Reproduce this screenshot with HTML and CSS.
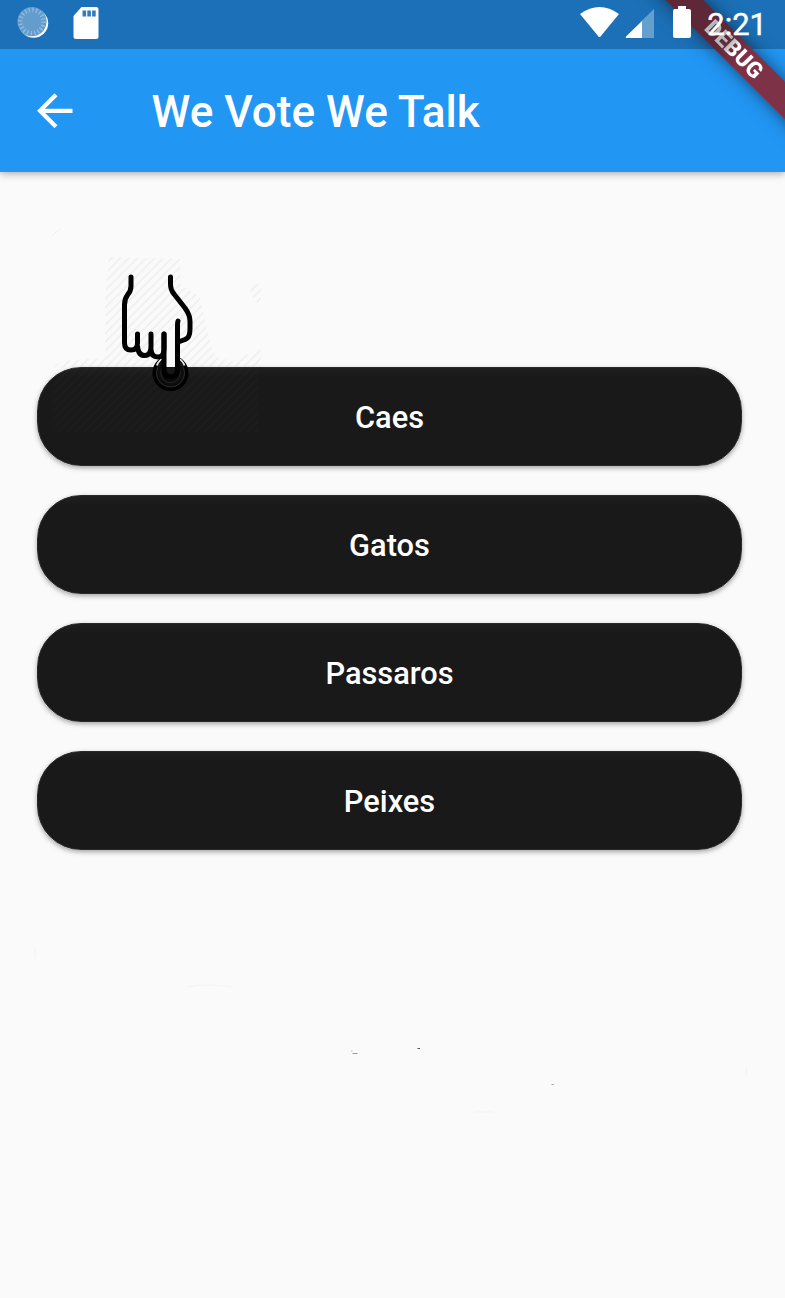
FILE: index.html
```html
<!DOCTYPE html>
<html lang="pt">
<head>
<meta charset="utf-8">
<title>We Vote We Talk</title>
<link rel="stylesheet" href="styles.css">
</head>
<body>
<div class="screen">
  <header class="top">
    <div class="statusbar">
      <svg class="spinner" width="32" height="32" viewBox="0 0 32 32">
        <circle cx="16.6" cy="16.2" r="14.600" fill="#fff"/>
        <circle cx="15" cy="14.600" r="14.6" fill="#629dce"/>
        <circle cx="15" cy="14.600" r="11.600" fill="none" stroke="#94bcdf" stroke-width="4.500" stroke-dasharray="1.2 2.445"/>
      </svg>
      <svg class="sdcard" width="26" height="32" viewBox="0 0 26 32">
        <path fill="#fff" d="M8.5 0H23q2.500 0 2.500 2.500V29.500q0 2.500-2.500 2.500H3Q.5 32 .5 29.500V9Z"/>
        <path fill="#2e7dbe" d="M9.500 3.400h3.600v6H9.500zM14.300 3.400h3.600v6h-3.600zM19.100 3.400h3.600v6h-3.600z"/>
      </svg>
      <div class="system">
        <svg class="wifi" width="39" height="31" viewBox="0 0 39 31">
          <path fill="#fff" d="M0 7Q19.500-7 39 7L20.500 29.500q-1 1-2 0Z"/>
        </svg>
        <svg class="signal" width="30" height="29" viewBox="0 0 30 29">
          <path fill="#659fce" d="M29 0V29H16V12.500Z"/>
          <path fill="#fff" d="M17 12V29H2Q0 29 1 27.500Z"/>
        </svg>
        <svg class="battery" width="18" height="32" viewBox="0 0 18 32">
          <path fill="#fff" d="M5 0h8v3h3q2 0 2 2v25q0 2-2 2H2q-2 0-2-2V5q0-2 2-2h3z"/>
        </svg>
        <span class="clock">2:21</span>
      </div>
    </div>
    <div class="appbar">
      <svg class="back" width="36" height="36" viewBox="0 0 36 36" fill="none" stroke="#fff" stroke-width="4.200">
        <path d="M35.500 17.800H4M19 1.800L3 17.800L19 33.800"/>
      </svg>
      <h1 class="title">We Vote We Talk</h1>
    </div>
    <div class="debug-clip"><div class="debug"><span class="debug-label">DEBUG</span></div></div>
  </header>
  <main class="topics">
    <button class="topic">Caes</button>
    <button class="topic">Gatos</button>
    <button class="topic">Passaros</button>
    <button class="topic">Peixes</button>
  </main>
  <svg class="pointer" width="785" height="1298" viewBox="0 0 785 1298">
    <defs>
      <pattern id="hatch" width="8.600" height="8.600" patternUnits="userSpaceOnUse">
        <path d="M-2 2L2-2M-1 9.600L9.600-1M6.600 10.600L10.600 6.600" stroke="#999" stroke-width="1.300"/>
      </pattern>
    </defs>
    <path fill="url(#hatch)" opacity=".14" d="M109 257L180 259L181 285L200 297L207 330L215 357L232 361L261 349V367H53L62 361L105 358V300Z"/>
    <path fill="url(#hatch)" opacity=".14" d="M249 287L261 283V307L254 299Z"/>
    <path fill="url(#hatch)" opacity=".035" d="M53 367H258V432H53Z"/>
    <path d="M52 236q4-5 9-7" fill="none" stroke="#efefef"/>
    <circle cx="170.500" cy="373" r="16.300" fill="#0c0c0c" stroke="#000" stroke-width="3.500"/>
    <circle cx="170.500" cy="373" r="14" fill="none" stroke="#2b2b2b" stroke-width="1"/>
    <circle cx="170.500" cy="373" r="9.800" fill="none" stroke="#252525" stroke-width="1"/>
    <path d="M156.800 365.500q2-5 6-7M178.500 358.500q4 2 6 7" fill="none" stroke="#eee" stroke-width="1.800"/>
    <path d="M166 330h9v37H166z" fill="#fafafa"/>
    <path d="M166 367h9v5q-4.500 4-9 0z" fill="#171717"/>
    <g fill="none" stroke="#000" stroke-width="5" stroke-linecap="round" stroke-linejoin="round">
      <path d="M131 277V286Q131 291 127.500 295Q124.500 299 124.500 305V343Q124.500 350 131 350Q137.500 350 137.500 343V334M137.500 346Q138 355.500 145 355.500Q151 355.500 151 346V334M151 349Q151 357 158 357Q164 357 164 349V334"/>
      <path d="M164 334V369Q164 377 170.800 377Q177.500 377 177.500 369V325Q177.500 322.500 178 321"/>
      <path d="M170.500 277V284Q170.500 290 174 294L185 308Q190 315 190 321V329Q190 338 185 339.500L179.500 341.500"/>
    </g>
    <g fill="none" stroke="#f3f3f3">
      <path d="M218 855.500H329M187 987q20-4 45 0M35 947v11M746.500 1067v8M475 1112h18"/>
      <path d="M351 1051h1.500" stroke="#bbb"/>
      <path d="M352.500 1053.500h5" stroke="#999"/>
      <path d="M417.500 1048.500h2.500" stroke="#555"/>
      <path d="M551.500 1084.500h2.500" stroke="#aaa"/>
    </g>
  </svg>
</div>
</body>
</html>
```
FILE: styles.css
```css
body { margin: 0; }
.screen {
  position: relative;
  width: 785px;
  height: 1298px;
  overflow: hidden;
  background: #fafafa;
  font-family: Roboto, sans-serif;
  font-weight: 500;
  color: #fff;
}
.top {
  position: relative;
  height: 172px;
  background: #2196f3;
  box-shadow: 0 1px 8px rgba(0, 0, 0, .38);
}
.statusbar {
  box-sizing: border-box;
  display: flex;
  align-items: flex-start;
  height: 49px;
  padding: 7px 18px 0 17px;
  background: #1b70b7;
}
.sdcard { margin-left: 24px; }
.system {
  position: relative;
  z-index: 2;
  display: flex;
  align-items: flex-start;
  margin-left: auto;
}
.signal { margin: 2px 0 0 6px; }
.battery { margin: -1px 0 0 18px; }
.clock {
  margin-left: 16px;
  font-size: 31px;
  font-weight: 400;
  line-height: 36px;
  -webkit-text-stroke: .4px #fff;
}
.appbar {
  display: flex;
  align-items: center;
  height: 123px;
  padding-left: 37px;
}
.title {
  margin: 0 0 0 78.500px;
  padding-top: 2px;
  font-size: 44.1px;
  font-weight: 500;
  line-height: 52px;
}
.debug-clip {
  position: absolute;
  inset: 0;
  overflow: hidden;
}
.debug {
  position: absolute;
  top: 36px;
  right: -59px;
  width: 220px;
  height: 27px;
  line-height: 27px;
  text-align: center;
  background: linear-gradient(90deg, #5f2838 0 43%, #7e3248 57%);
  box-shadow: 0 0 18px rgba(0, 0, 0, .5);
  transform: rotate(45deg);
}
.debug-label {
  font-size: 22.500px;
  font-weight: 900;
  background: linear-gradient(90deg, #b9b9b9 0 40%, #fff 52%);
  -webkit-background-clip: text;
  background-clip: text;
  color: transparent;
}
.topics {
  display: flex;
  flex-direction: column;
  gap: 29px;
  padding: 195px 43px 0 37px;
}
.topic {
  height: 98.900px;
  padding: 3px 0 0;
  border: 1px solid #292929;
  border-radius: 44px;
  background: linear-gradient(#1f1f1f, #191919 10px);
  box-shadow: 0 2px 5px rgba(0, 0, 0, .35);
  color: #fff;
  font: 500 30.800px/36px Roboto, sans-serif;
}
.pointer {
  position: absolute;
  top: 0;
  left: 0;
}
```
